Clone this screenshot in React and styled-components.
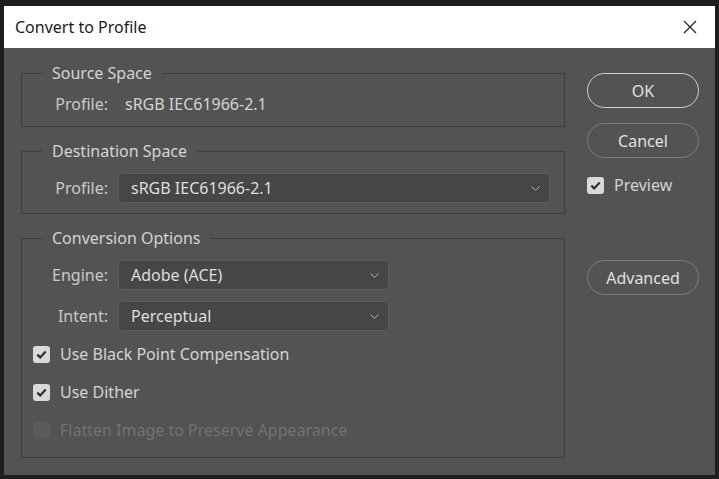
import styled, { createGlobalStyle } from "styled-components";

const Global = createGlobalStyle`
    html, body {
        margin: 0;
        padding: 0;
        background: #1e1e1e;
    }
    body {
        width: 719px;
        height: 479px;
        overflow: hidden;
        font-family: "Noto Sans", "Open Sans", sans-serif;
    }
`;

const Window = styled.div`
    margin: 6px 4px 0 4px;
    width: 711px;
    height: 469px;
    display: flex;
    flex-direction: column;
    background: #535353;
`;
const TitleBar = styled.div`
    height: 42px;
    flex: none;
    background: #ffffff;
    display: flex;
    align-items: center;
    justify-content: space-between;
    padding: 0 18px 0 11px;
`;
const Title = styled.div`
    font-size: 16px;
    color: #1a1a1a;
`;
const Close = styled.svg`
    width: 14px;
    height: 14px;
`;
const Body = styled.div`
    display: flex;
    gap: 22px;
    padding: 15px 16px 0 17px;
`;
const Left = styled.div`
    width: 544px;
    display: flex;
    flex-direction: column;
    gap: 14px;
`;
const Group = styled.fieldset`
    margin: 0;
    padding: 0 0 ${p => p.$bottom}px 0;
    border: 1px solid #3d3d3d;
    min-width: 0;
`;
const Legend = styled.legend`
    margin-left: 20px;
    padding: 0 10px;
    font-size: 16px;
    line-height: 20px;
    color: #d4d4d4;
`;
const Row = styled.div`
    display: flex;
    align-items: center;
    margin-top: ${p => p.$top || 0}px;
    height: ${p => p.$h || 30}px;
`;
const Label = styled.div`
    box-sizing: border-box;
    flex: none;
    width: 96px;
    padding-right: 10px;
    text-align: right;
    font-size: 16px;
    line-height: 20px;
    color: #c9c9c9;
`;
const Value = styled.div`
    margin-left: 7px;
    font-size: 16px;
    line-height: 20px;
    color: #d4d4d4;
`;
const Select = styled.div`
    box-sizing: border-box;
    width: ${p => p.$w}px;
    height: 30px;
    background: #464646;
    border: 1px solid #5e5e5e;
    border-radius: 4px;
    display: flex;
    align-items: center;
    justify-content: space-between;
    padding: 0 9px 0 12px;
    font-size: 16px;
    color: #dedede;
`;
const Chevron = styled.svg`
    width: 9px;
    height: 5px;
`;
const CheckRow = styled.div`
    display: flex;
    align-items: center;
    height: 38px;
    padding-left: 11px;
    gap: 10px;
    font-size: 16px;
    line-height: 20px;
    color: ${p => (p.$disabled ? "#727272" : "#d4d4d4")};
`;
const Box = styled.div`
    flex: none;
    width: 17px;
    height: 17px;
    border-radius: 3px;
    background: ${p => (p.$disabled ? "#5b5b5b" : "#d9d9d9")};
    display: flex;
    align-items: center;
    justify-content: center;
`;
const Right = styled.div`
    width: 112px;
    padding-top: 10px;
    display: flex;
    flex-direction: column;
`;
const Button = styled.div`
    box-sizing: border-box;
    height: 35px;
    border-radius: 18px;
    border: 1px solid ${p => (p.$primary ? "#cfcfcf" : "#7d7d7d")};
    display: flex;
    align-items: center;
    justify-content: center;
    font-size: 16px;
    color: #e0e0e0;
    margin-top: ${p => p.$top || 0}px;
`;
const PreviewRow = styled(CheckRow)`
    padding-left: 0;
    margin-top: 10px;
    height: 34px;
`;

function Check({ checked, disabled }) {
    return (
        <Box $disabled={disabled}>
            {checked && (
                <svg width="11" height="9" viewBox="0 0 11 9">
                    <path d="M1.3 4.6 L4.2 7.4 L9.7 1.6" fill="none" stroke="#2e2e2e" strokeWidth="2.2" />
                </svg>
            )}
        </Box>
    );
}

function Dropdown({ width, children }) {
    return (
        <Select $w={width}>
            {children}
            <Chevron viewBox="0 0 9 5">
                <path d="M0.5 0.5 L4.5 4.3 L8.5 0.5" fill="none" stroke="#b0b0b0" strokeWidth="1" />
            </Chevron>
        </Select>
    );
}

export default function App() {
    return (
        <>
            <Global />
            <Window>
                <TitleBar>
                    <Title>Convert to Profile</Title>
                    <Close viewBox="0 0 14 14">
                        <path d="M1 1 L13 13 M13 1 L1 13" stroke="#222" strokeWidth="1.2" />
                    </Close>
                </TitleBar>
                <Body>
                    <Left>
                        <Group $bottom={12}>
                            <Legend>Source Space</Legend>
                            <Row $top={11} $h={20}>
                                <Label>Profile:</Label>
                                <Value>sRGB IEC61966-2.1</Value>
                            </Row>
                        </Group>
                        <Group $bottom={10}>
                            <Legend>Destination Space</Legend>
                            <Row $top={12}>
                                <Label>Profile:</Label>
                                <Dropdown width={432}>sRGB IEC61966-2.1</Dropdown>
                            </Row>
                        </Group>
                        <Group $bottom={8}>
                            <Legend>Conversion Options</Legend>
                            <Row $top={12}>
                                <Label>Engine:</Label>
                                <Dropdown width={271}>Adobe (ACE)</Dropdown>
                            </Row>
                            <Row $top={11}>
                                <Label>Intent:</Label>
                                <Dropdown width={271}>Perceptual</Dropdown>
                            </Row>
                            <div style={{ height: 4 }} />
                            <CheckRow>
                                <Check checked />
                                Use Black Point Compensation
                            </CheckRow>
                            <CheckRow>
                                <Check checked />
                                Use Dither
                            </CheckRow>
                            <CheckRow $disabled>
                                <Check disabled />
                                Flatten Image to Preserve Appearance
                            </CheckRow>
                        </Group>
                    </Left>
                    <Right>
                        <Button $primary>OK</Button>
                        <Button $top={15}>Cancel</Button>
                        <PreviewRow>
                            <Check checked />
                            Preview
                        </PreviewRow>
                        <Button $top={58}>Advanced</Button>
                    </Right>
                </Body>
            </Window>
        </>
    );
}
